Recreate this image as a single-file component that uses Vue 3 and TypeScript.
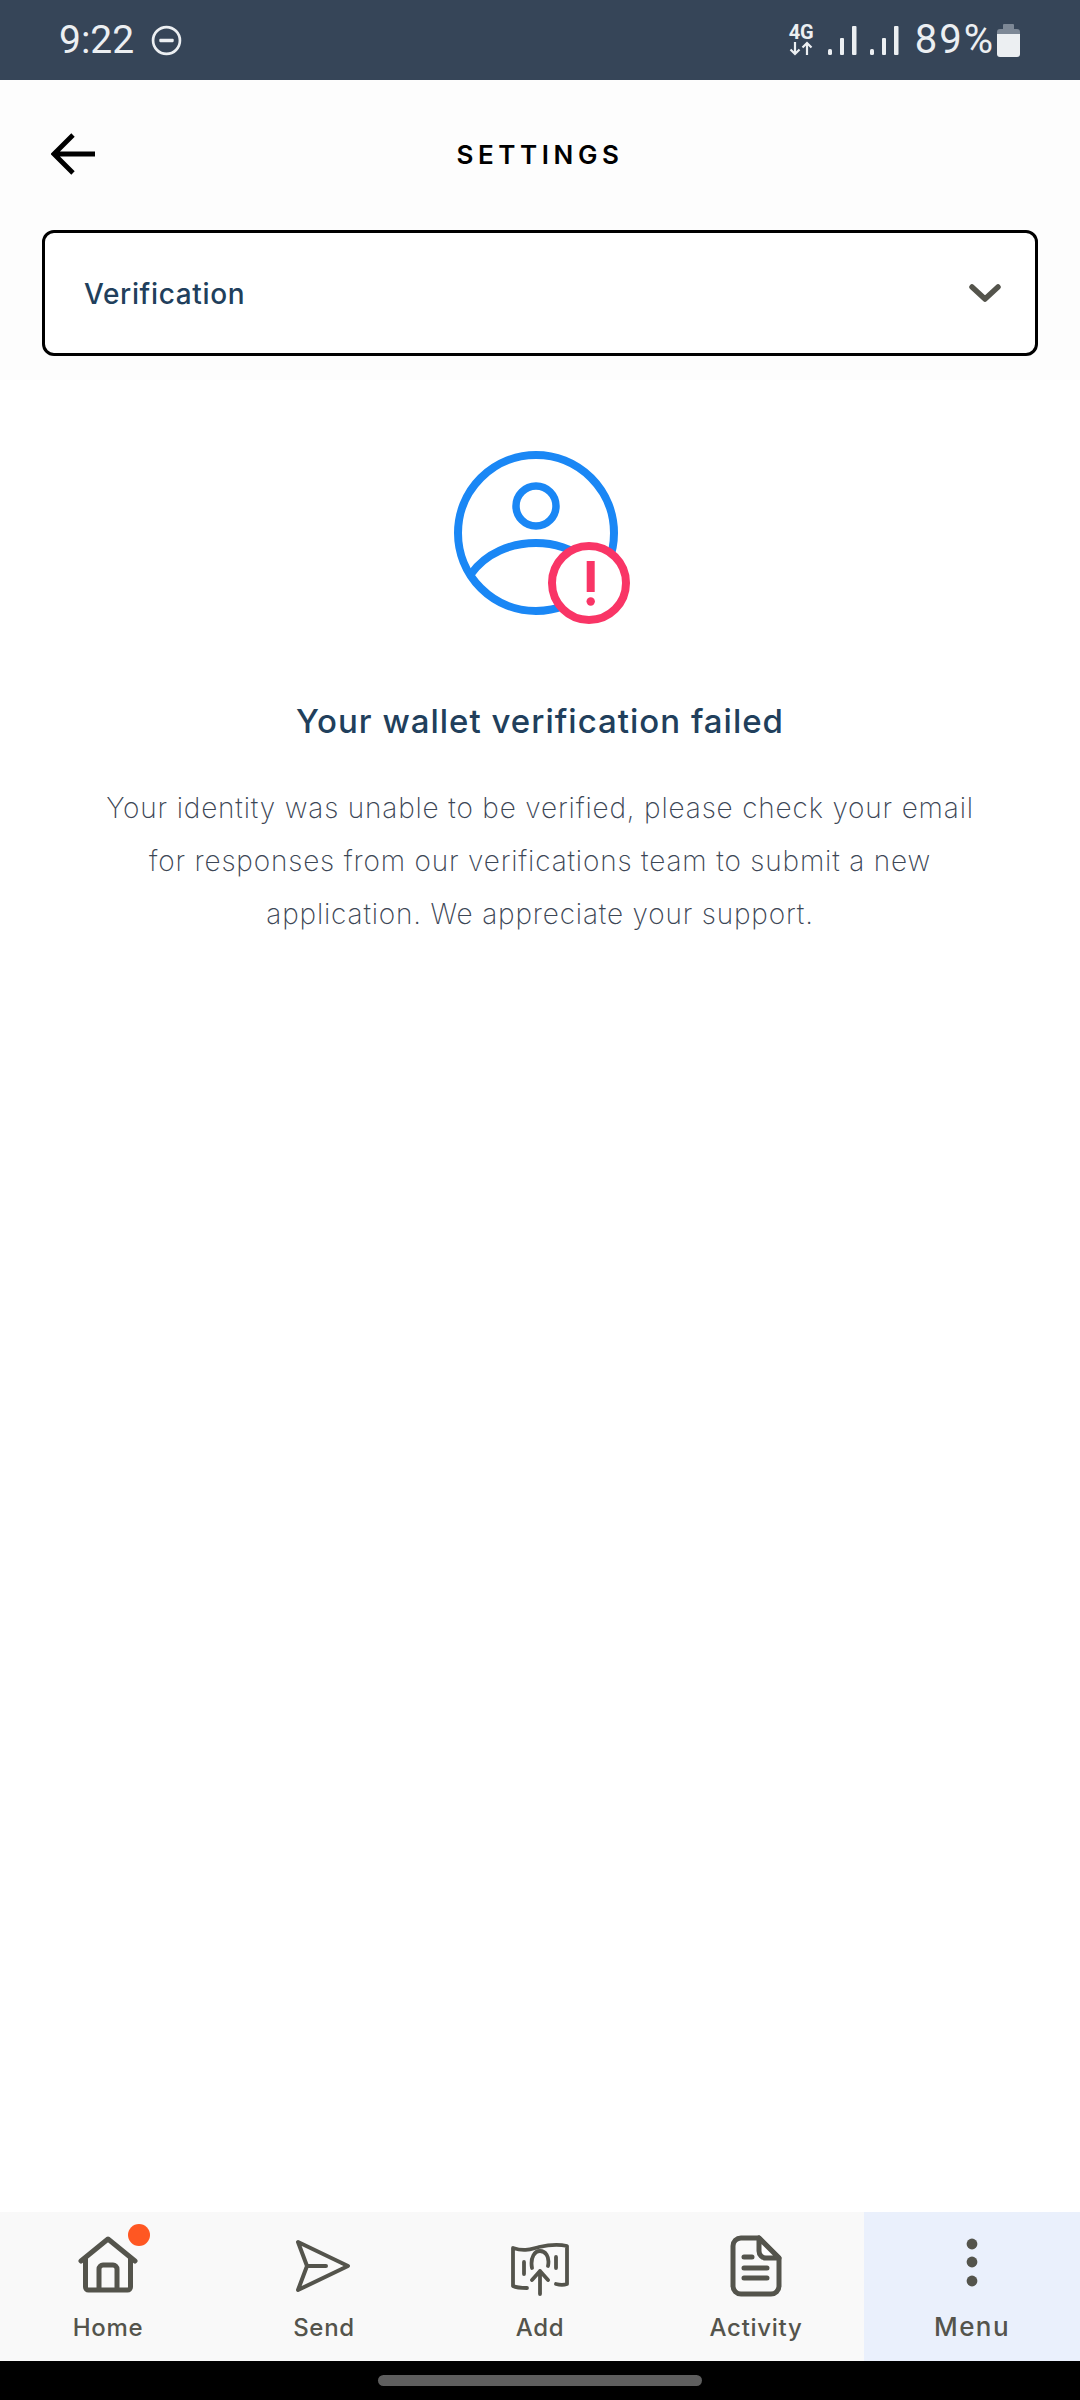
<script setup lang="ts">
interface NavItem {
  key: string
  label: string
  active?: boolean
  badge?: boolean
}

const navItems: NavItem[] = [
  { key: "home", label: "Home", badge: true },
  { key: "send", label: "Send" },
  { key: "add", label: "Add" },
  { key: "activity", label: "Activity" },
  { key: "menu", label: "Menu", active: true }
]
</script>

<template>
  <div class="screen">
    <div class="status-bar">
      <div class="status-left">
        <span class="clock">9:22</span>
        <svg class="dnd" width="31" height="31" viewBox="0 0 30 30">
          <circle cx="15" cy="15" r="13" fill="none" stroke="#eceff2" stroke-width="2.6" />
          <rect x="8" y="13.4" width="14" height="3.2" rx="1" fill="#eceff2" />
        </svg>
      </div>
      <div class="status-right">
        <div class="net">
          <span class="net-label">4G</span>
          <svg width="24" height="15" viewBox="0 0 24 15">
            <path d="M6 1v12M1.5 8.500l4.500 4.500 4.500-4.500M18 14V2M13.500 6.500L18 2l4.500 4.500" fill="none" stroke="#eceff2" stroke-width="2.2" />
          </svg>
        </div>
        <svg class="signal" width="29" height="30" viewBox="0 0 29 30">
          <rect x="0" y="24" width="4" height="6" rx="1.500" fill="#eceff2" />
          <rect x="12" y="13" width="4" height="17" rx="1" fill="#eceff2" />
          <rect x="24" y="1" width="4.500" height="29" rx="1" fill="#eceff2" />
        </svg>
        <svg class="signal" width="29" height="30" viewBox="0 0 29 30">
          <rect x="0" y="24" width="4" height="6" rx="1.500" fill="#eceff2" />
          <rect x="12" y="13" width="4" height="17" rx="1" fill="#eceff2" />
          <rect x="24" y="1" width="4.500" height="29" rx="1" fill="#eceff2" />
        </svg>
        <span class="percent">89%</span>
        <svg class="battery" width="23" height="33" viewBox="0 0 23 33">
          <path d="M7 0h9a1 1 0 0 1 1 1v4h3a3 3 0 0 1 3 3v3H0V8a3 3 0 0 1 3-3h3V1a1 1 0 0 1 1-1z" fill="#7d8896" />
          <path d="M0 10h23v20a3 3 0 0 1-3 3H3a3 3 0 0 1-3-3z" fill="#eceff2" />
        </svg>
      </div>
    </div>

    <div class="top">
      <div class="top-bar">
        <svg class="back" width="44" height="44" viewBox="0 0 44 44">
          <path d="M44 22H3M22 3L3 22l19 19" fill="none" stroke="#000" stroke-width="4.800" />
        </svg>
        <h1 class="page-title">SETTINGS</h1>
      </div>
      <div class="select">
        <span>Verification</span>
        <svg width="32" height="20" viewBox="0 0 32 20">
          <path d="M3 3l13 12L29 3" fill="none" stroke="#54544c" stroke-width="5.500" stroke-linecap="round" stroke-linejoin="round" />
        </svg>
      </div>
    </div>

    <main class="content">
      <svg class="hero" width="180" height="180" viewBox="0 0 180 180">
        <circle cx="85" cy="85" r="78" fill="none" stroke="#1a87f5" stroke-width="8" />
        <circle cx="85" cy="58" r="20" fill="none" stroke="#1a87f5" stroke-width="7.500" />
        <path d="M20 126C35 105 60 95 85 95c20 0 36 6 50 17" fill="none" stroke="#1a87f5" stroke-width="8" />
        <circle cx="138" cy="135" r="37" fill="#fff" stroke="#f93566" stroke-width="8" />
        <rect x="135.700" y="113" width="8" height="31" fill="#f93566" />
        <circle cx="139.700" cy="153.500" r="4.200" fill="#f93566" />
      </svg>
      <h2 class="headline">Your wallet verification failed</h2>
      <p class="message">
        Your identity was unable to be verified, please check your email<br />
        for responses from our verifications team to submit a new<br />
        application. We appreciate your support.
      </p>
    </main>

    <nav class="bottom-nav">
      <div
        v-for="item in navItems"
        :key="item.key"
        class="nav-item"
        :class="{ 'nav-item-active': item.active }">
        <div class="nav-icon">
          <svg v-if="item.key === 'home'" width="64" height="64" viewBox="0 0 64 64">
            <path d="M5 27L32 5l27 22M9.500 24v29a3 3 0 0 0 3 3h39a3 3 0 0 0 3-3V24M23 56V35a4 4 0 0 1 4-4h10a4 4 0 0 1 4 4v21" fill="none" stroke="#54544c" stroke-width="5" stroke-linecap="round" stroke-linejoin="round" />
          </svg>
          <svg v-else-if="item.key === 'send'" width="64" height="64" viewBox="0 0 64 64">
            <path d="M6 8l50 24L6 56l9-24zM15 32h19" fill="none" stroke="#54544c" stroke-width="4" stroke-linecap="round" stroke-linejoin="round" />
          </svg>
          <svg v-else-if="item.key === 'add'" width="64" height="64" viewBox="0 0 64 64">
            <path d="M19 54c-5 0-10 0-14-2V14c12 4 18 1 26-1 9-2 19-3 28-1v38c-3 1-7 1-11 0" fill="none" stroke="#54544c" stroke-width="3.800" stroke-linecap="round" stroke-linejoin="round" />
            <path d="M16 28v12M48 23v11M24 34c-2-11 3-17 8-17s10 5 8 15M32 60V37M24 46l8-9 8 9" fill="none" stroke="#54544c" stroke-width="3.800" stroke-linecap="round" stroke-linejoin="round" />
          </svg>
          <svg v-else-if="item.key === 'activity'" width="64" height="64" viewBox="0 0 64 64">
            <path d="M35 4H17a8 8 0 0 0-8 8v40a8 8 0 0 0 8 8h30a8 8 0 0 0 8-8V24z" fill="none" stroke="#54544c" stroke-width="5" stroke-linejoin="round" />
            <path d="M35 4v13a7 7 0 0 0 7 7h13z" fill="#fff" stroke="#54544c" stroke-width="5" stroke-linejoin="round" />
            <path d="M20 23h8M20 34h23M20 44h23" fill="none" stroke="#54544c" stroke-width="5" stroke-linecap="round" />
          </svg>
          <svg v-else width="64" height="64" viewBox="0 0 64 64">
            <circle cx="32" cy="10" r="5.400" fill="#54544c" />
            <circle cx="32" cy="28" r="5.400" fill="#54544c" />
            <circle cx="32" cy="47" r="5.400" fill="#54544c" />
          </svg>
          <span v-if="item.badge" class="nav-badge"></span>
        </div>
        <span class="nav-label">{{ item.label }}</span>
      </div>
    </nav>

    <div class="gesture-bar">
      <div class="gesture-pill"></div>
    </div>
  </div>
</template>

<style>
html,
body {
  margin: 0;
  background: #fff;
}
</style>

<style scoped>
.screen {
  width: 1080px;
  height: 2400px;
  display: flex;
  flex-direction: column;
  background: #fff;
  font-family: Inter, "Liberation Sans", sans-serif;
  overflow: hidden;
}

.status-bar {
  height: 80px;
  flex: none;
  display: flex;
  justify-content: space-between;
  align-items: center;
  padding: 0 60px 0 59px;
  background: #364558;
  color: #eceff2;
  font-family: Roboto, "Liberation Sans", sans-serif;
}

.status-left,
.status-right {
  display: flex;
  align-items: center;
}

.clock {
  font-size: 39px;
  line-height: 40px;
}

.dnd {
  margin-left: 17px;
}

.net {
  display: flex;
  flex-direction: column;
  align-items: center;
  margin-right: 14px;
}

.net-label {
  font-size: 20px;
  line-height: 17px;
  font-weight: 700;
}

.signal {
  margin-right: 13px;
}

.percent {
  margin-left: 3px;
  font-size: 40px;
  line-height: 40px;
  letter-spacing: 2px;
}

.battery {
  margin-left: 2px;
}

.top {
  height: 300px;
  flex: none;
  padding: 0 42px;
  background: #fdfdfd;
}

.top-bar {
  height: 150px;
  display: flex;
  align-items: center;
  justify-content: center;
  position: relative;
}

.back {
  position: absolute;
  left: 9px;
  top: 52px;
}

.page-title {
  margin: 0 0 2px;
  font-size: 26px;
  font-weight: 600;
  letter-spacing: 4.600px;
  color: #000;
}

.select {
  height: 126px;
  box-sizing: border-box;
  border: 3px solid #000;
  border-radius: 12px;
  display: flex;
  align-items: center;
  justify-content: space-between;
  padding: 2px 34px 0 39px;
  background: #fff;
  color: #213f5c;
  font-size: 28px;
  font-weight: 450;
  letter-spacing: 0.650px;
}

.content {
  flex: 1;
  display: flex;
  flex-direction: column;
  align-items: center;
  padding-top: 68px;
}

.hero {
  flex: none;
  margin-left: 1px;
}

.headline {
  margin: 71px 0 0;
  font-size: 33px;
  line-height: 44px;
  font-weight: 500;
  letter-spacing: 1px;
  color: #213f5c;
}

.message {
  margin: 39px 0 0;
  font-size: 28px;
  line-height: 53px;
  font-weight: 220;
  letter-spacing: 0.820px;
  text-align: center;
  color: #3c4655;
  white-space: nowrap;
}

.bottom-nav {
  height: 149px;
  flex: none;
  display: grid;
  grid-template-columns: repeat(5, 1fr);
  background: #f9f9f9;
}

.nav-item {
  display: flex;
  flex-direction: column;
  align-items: center;
  padding-top: 22px;
  box-sizing: border-box;
}

.nav-item-active {
  background: #eaf0fc;
}

.nav-icon {
  width: 64px;
  height: 64px;
  position: relative;
}

.nav-badge {
  position: absolute;
  left: 52px;
  top: -10px;
  width: 22px;
  height: 22px;
  border-radius: 50%;
  background: #ff5722;
}

.nav-label {
  margin-top: 15px;
  font-size: 24px;
  line-height: 30px;
  font-weight: 450;
  letter-spacing: 0.700px;
  color: #54544c;
}

.nav-item-active .nav-label {
  margin-top: 14px;
  font-size: 26px;
  letter-spacing: 1.400px;
}

.gesture-bar {
  flex: 1 0 39px;
  max-height: 39px;
  background: #000;
  display: flex;
  justify-content: center;
  padding-top: 14px;
  box-sizing: border-box;
}

.gesture-pill {
  width: 324px;
  height: 11px;
  border-radius: 6px;
  background: #5e5e5e;
}
</style>
